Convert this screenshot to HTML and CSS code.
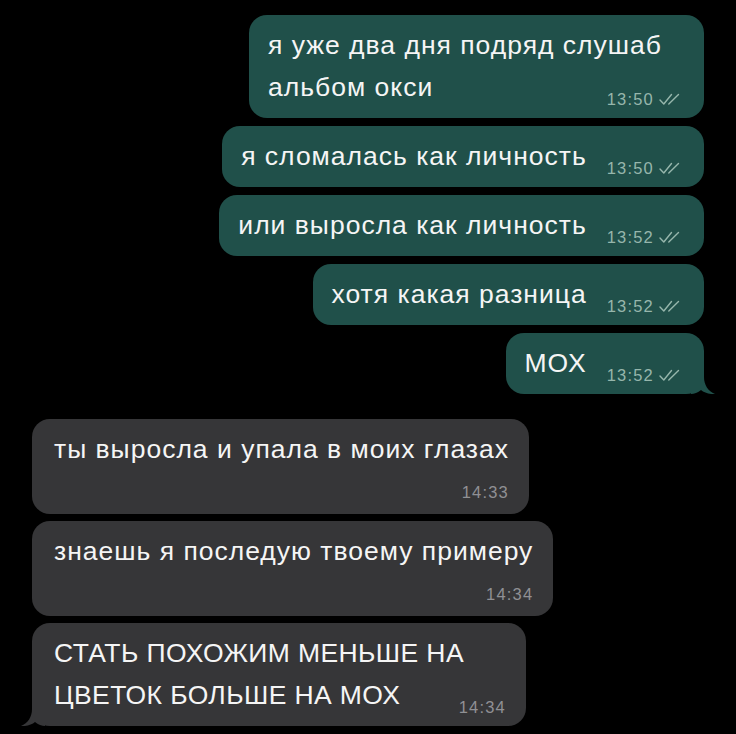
FILE: index.html
```html
<!DOCTYPE html>
<html lang="ru">
<head>
<meta charset="utf-8">
<title>Чат</title>
<link rel="stylesheet" href="styles.css">
</head>
<body>
<main class="chat">
  <section class="group group--out">
    <div class="msg msg--out msg--out-wide">я уже два дня подряд слушаб<br>альбом окси<span class="meta">13:50<svg class="ticks" viewBox="0 0 21 12"><path d="M1 7 L4.8 11 L12.5 1.5 M9.8 11 L19.5 1.5"/></svg></span></div>
    <div class="msg msg--out">я сломалась как личность<span class="meta">13:50<svg class="ticks" viewBox="0 0 21 12"><path d="M1 7 L4.8 11 L12.5 1.5 M9.8 11 L19.5 1.5"/></svg></span></div>
    <div class="msg msg--out">или выросла как личность<span class="meta">13:52<svg class="ticks" viewBox="0 0 21 12"><path d="M1 7 L4.8 11 L12.5 1.5 M9.8 11 L19.5 1.5"/></svg></span></div>
    <div class="msg msg--out">хотя какая разница<span class="meta">13:52<svg class="ticks" viewBox="0 0 21 12"><path d="M1 7 L4.8 11 L12.5 1.5 M9.8 11 L19.5 1.5"/></svg></span></div>
    <div class="msg msg--out msg--tail">МОХ<span class="meta">13:52<svg class="ticks" viewBox="0 0 21 12"><path d="M1 7 L4.8 11 L12.5 1.5 M9.8 11 L19.5 1.5"/></svg></span><svg class="tail" viewBox="0 0 24 24"><path d="M0 0 H13 V7 C13 15 17 21 24 24 C18 24.5 13 22.5 10 20 C7 22.5 3 24 0 24 Z"/></svg></div>
  </section>
  <section class="group group--in">
    <div class="msg msg--in"><div class="text">ты выросла и упала в моих глазах</div><div class="meta-below">14:33</div></div>
    <div class="msg msg--in"><div class="text">знаешь я последую твоему примеру</div><div class="meta-below">14:34</div></div>
    <div class="msg msg--in msg--in-wide msg--tail"><span class="caps">СТАТЬ ПОХОЖИМ МЕНЬШЕ НА<br>ЦВЕТОК БОЛЬШЕ НА МОХ</span><span class="meta">14:34</span><svg class="tail" viewBox="0 0 24 24"><path d="M0 0 H13 V7 C13 15 17 21 24 24 C18 24.5 13 22.5 10 20 C7 22.5 3 24 0 24 Z"/></svg></div>
  </section>
</main>
</body>
</html>
```

FILE: styles.css
```css
* { box-sizing: border-box; }

html, body {
  margin: 0;
  background: #000;
}

.chat {
  padding: 15px 32px 0;
  font-family: "Liberation Sans", Arial, sans-serif;
  color: #f5f5f5;
}

.group {
  display: flex;
  flex-direction: column;
}

.group--out {
  align-items: flex-end;
  gap: 8px;
}

.group--in {
  align-items: flex-start;
  gap: 7px;
  margin-top: 25px;
}

.msg {
  position: relative;
  font-size: 26.5px;
  line-height: 42px;
  letter-spacing: 1px;
  border-radius: 18px;
  padding: 9px 24px 10px 19px;
  white-space: nowrap;
}

.msg--out {
  background: #20504a;
}

.msg--out-wide {
  width: 455px;
}

.msg--in {
  background: #363638;
  padding: 9px 20px 12px 22px;
}

.msg--in-wide {
  width: 494px;
  padding-bottom: 10px;
}

.caps {
  letter-spacing: 0.4px;
}

/* time stamp sitting at the end of the last line */
.meta {
  float: right;
  position: relative;
  top: 23px;
  display: flex;
  align-items: center;
  margin-left: 20px;
  font-size: 16.5px;
  line-height: 20px;
  letter-spacing: 1.2px;
  color: #96b6ac;
}

.msg--in .meta {
  color: #909094;
}

/* time stamp on its own line under the text */
.meta-below {
  margin-top: 12px;
  text-align: right;
  font-size: 16.5px;
  line-height: 20px;
  letter-spacing: 1.2px;
  color: #909094;
}

.ticks {
  width: 21px;
  height: 12px;
  margin-left: 5px;
  fill: none;
  stroke: #96b6ac;
  stroke-width: 1.4;
  stroke-linecap: round;
  stroke-linejoin: round;
}

.tail {
  position: absolute;
  bottom: 0;
  width: 24px;
  height: 24px;
}

.msg--out .tail {
  right: -11px;
  fill: #20504a;
}

.msg--in .tail {
  left: -11px;
  fill: #363638;
  transform: scaleX(-1);
}
```
